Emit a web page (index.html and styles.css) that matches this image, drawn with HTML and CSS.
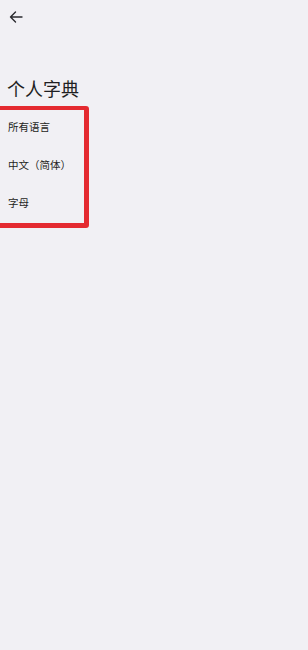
FILE: index.html
```html
<!DOCTYPE html>
<html lang="zh-CN">
<head>
    <meta charset="UTF-8">
    <meta name="viewport" content="width=device-width, initial-scale=1.0">
    <title>个人字典</title>
    <link rel="stylesheet" href="styles.css">
</head>
<body>
    <div class="topbar">
        <button class="back" aria-label="返回">
            <svg width="14" height="12" viewBox="0 0 14 12">
                <path d="M13 6H1.5M6.5 1L1.5 6l5 5" fill="none" stroke="#2a2a2e" stroke-width="1.4" stroke-linecap="round" stroke-linejoin="round"/>
            </svg>
        </button>
    </div>

    <h1 class="title">个人字典</h1>

    <div class="langList">
        <div class="langItem">所有语言</div>
        <div class="langItem">中文（简体）</div>
        <div class="langItem">字母</div>
        <div class="highlight"></div>
    </div>
</body>
</html>
```

FILE: styles.css
```css
html, body {
    min-height: 100%;
}
body {
    margin: 0;
    min-height: 100vh;
    background-color: #f1f0f4;
    color: #1f1f22;
    font-family: "Noto Sans CJK SC", "Noto Sans", sans-serif;
}
.topbar {
    height: 34px;
    display: flex;
    align-items: center;
    padding-left: 9px;
}
.back {
    border: none;
    background: none;
    padding: 0;
    width: 14px;
    height: 12px;
    display: flex;
}
.title {
    margin: 42px 0 0 7px;
    font-size: 18px;
    line-height: 24px;
    font-weight: normal;
}
.langList {
    position: relative;
    margin: 6px 0 0 -4px;
    padding: 2px 0 6px 4px;
    width: 89px;
}
.langItem {
    height: 38px;
    line-height: 38px;
    padding-left: 8px;
    font-size: 10.5px;
}
.highlight {
    position: absolute;
    top: 0;
    left: 0;
    right: 0;
    bottom: 0;
    border: 4px solid #e42a30;
    border-right-width: 5px;
    border-bottom-width: 5px;
    border-radius: 3px;
    pointer-events: none;
}
```
